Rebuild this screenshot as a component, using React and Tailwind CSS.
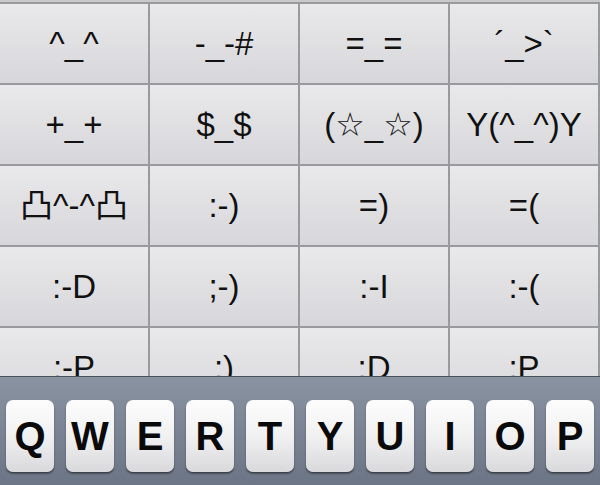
const rows = [
  ['^_^', '-_-#', '=_=', '´_>`'],
  ['+_+', '$_$', '(☆_☆)', 'Y(^_^)Y'],
  ['凸^-^凸', ':-)', '=)', '=('],
  [':-D', ';-)', ':-I', ':-('],
  [':-P', ':)', ':D', ':P'],
];

const keys = ['Q', 'W', 'E', 'R', 'T', 'Y', 'U', 'I', 'O', 'P'];

const font = { fontFamily: "'Liberation Sans', 'DejaVu Sans', 'Noto Sans CJK SC', sans-serif" };

function Key({ label }) {
  return (
    <div className="w-[48px] h-[72px] rounded-[7px] bg-gradient-to-b from-[#fdfdfd] via-[#f1f1f2] to-[#d9d9dc] shadow-[0_1px_0_#3d434d,0_2px_2px_rgba(0,0,0,0.35)] flex items-center justify-center">
      <span className="text-[40px] font-bold text-[#0a0a0a] leading-none">{label}</span>
    </div>
  );
}

export default function App() {
  return (
    <div className="relative w-[600px] h-[485px] overflow-hidden bg-[#d4d4d8]" style={font}>
      <div className="h-[2px] bg-[#c9c9cc]" />
      {rows.map((row, i) => (
        <div key={i} className="flex h-[81px] border-t-2 border-[#999a9c]">
          {row.map((face, j) => (
            <div
              key={j}
              className="w-[150px] border-r-2 border-[#999a9c] bg-gradient-to-b from-[#e9e9eb] to-[#d7d7db] flex items-center justify-center"
            >
              <span className="text-[33px] text-[#111] leading-none">{face}</span>
            </div>
          ))}
        </div>
      ))}

      {/* keyboard overlay */}
      <div className="absolute left-0 right-0 top-[376px] bottom-0 border-t border-[#4b515b] bg-gradient-to-b from-[#8a93a2] to-[#6c7585]">
        <div className="flex gap-[12px] px-[6px] pt-[23px]">
          {keys.map((k) => (
            <Key key={k} label={k} />
          ))}
        </div>
      </div>
    </div>
  );
}
